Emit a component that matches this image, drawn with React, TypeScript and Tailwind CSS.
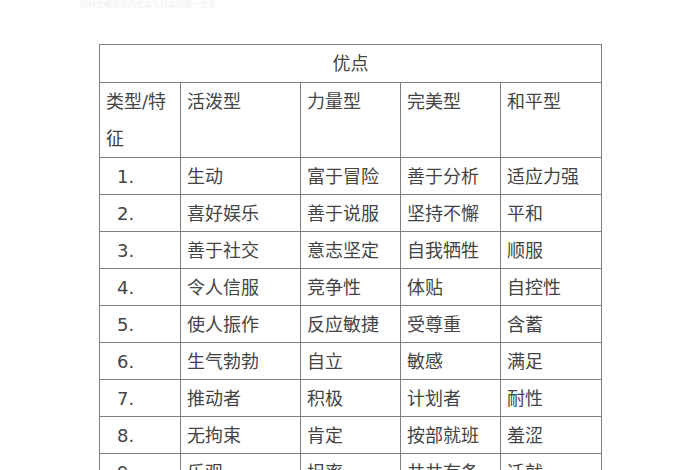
const rows: [string, string, string, string, string][] = [
  ["1.", "生动", "富于冒险", "善于分析", "适应力强"],
  ["2.", "喜好娱乐", "善于说服", "坚持不懈", "平和"],
  ["3.", "善于社交", "意志坚定", "自我牺牲", "顺服"],
  ["4.", "令人信服", "竞争性", "体贴", "自控性"],
  ["5.", "使人振作", "反应敏捷", "受尊重", "含蓄"],
  ["6.", "生气勃勃", "自立", "敏感", "满足"],
  ["7.", "推动者", "积极", "计划者", "耐性"],
  ["8.", "无拘束", "肯定", "按部就班", "羞涩"],
  ["9.", "乐观", "坦率", "井井有条", "迁就"],
];

const cell = "border border-[#7d7d7d] align-middle";

export default function App() {
  return (
    <div
      className="h-[470px] w-[700px] overflow-hidden bg-white text-[#444]"
      style={{ fontFamily: '"DejaVu Sans", "Noto Sans CJK SC", sans-serif' }}
    >
      <p className="ml-[80px] h-[10px] text-[8px] leading-[10px] text-[#eeeeee]">
        四种性格类型的优点与缺点对照一览表
      </p>
      <table className="ml-[99px] mt-[34px] w-[502px] table-fixed border-collapse text-[18px]">
        <colgroup>
          <col className="w-[81px]" />
          <col className="w-[120px]" />
          <col className="w-[100px]" />
          <col className="w-[100px]" />
          <col className="w-[101px]" />
        </colgroup>
        <tbody>
          <tr className="h-[38px]">
            <td colSpan={5} className={`${cell} text-center`}>
              优点
            </td>
          </tr>
          <tr className="h-[74px]">
            <td className={`${cell} align-top pl-[6px] leading-[37px]`}>
              类型/特
              <br />征
            </td>
            <td className={`${cell} align-top pl-[6px] leading-[37px]`}>活泼型</td>
            <td className={`${cell} align-top pl-[6px] leading-[37px]`}>力量型</td>
            <td className={`${cell} align-top pl-[6px] leading-[37px]`}>完美型</td>
            <td className={`${cell} align-top pl-[6px] leading-[37px]`}>和平型</td>
          </tr>
          {rows.map((r) => (
            <tr key={r[0]} className="h-[37px]">
              <td className={`${cell} pl-[17px]`}>{r[0]}</td>
              <td className={`${cell} pl-[6px]`}>{r[1]}</td>
              <td className={`${cell} pl-[6px]`}>{r[2]}</td>
              <td className={`${cell} pl-[6px]`}>{r[3]}</td>
              <td className={`${cell} pl-[6px]`}>{r[4]}</td>
            </tr>
          ))}
        </tbody>
      </table>
    </div>
  );
}
